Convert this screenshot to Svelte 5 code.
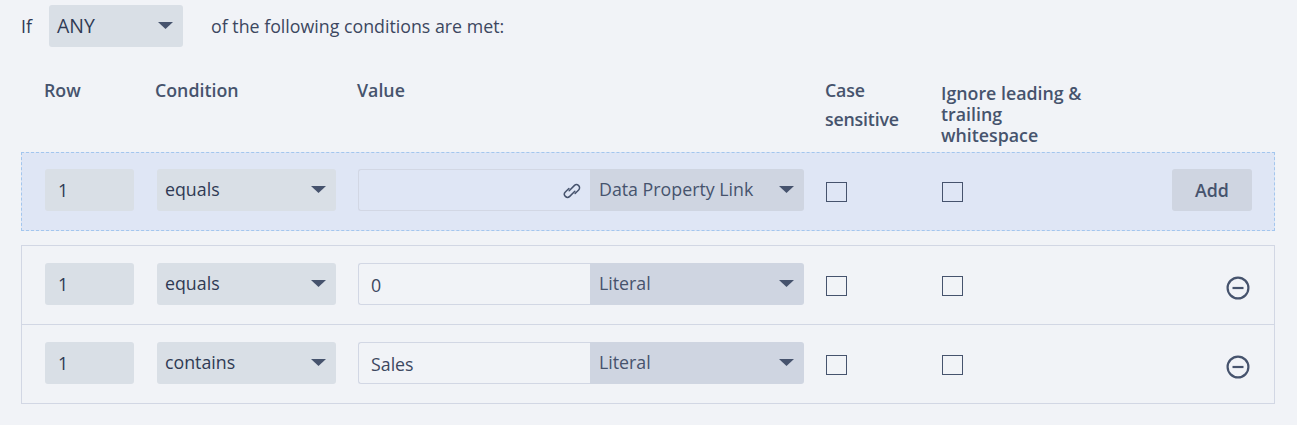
<script lang="ts">
	type Row = { condition: string; value: string; kind: string };

	const rows: Row[] = [
		{ condition: 'equals', value: '0', kind: 'Literal' },
		{ condition: 'contains', value: 'Sales', kind: 'Literal' }
	];
</script>

{#snippet chevron()}
	<svg class="caret" width="15" height="7" viewBox="0 0 15 7"><path d="M0 0h15L7.5 7z" fill="#46536d" /></svg>
{/snippet}

{#snippet fields(condition: string, value: string, kind: string, linked: boolean)}
	<div class="num">1</div>
	<div class="select cond"><span>{condition}</span>{@render chevron()}</div>
	<div class="value">
		<div class="value__input">
			<span>{value}</span>
			{#if linked}
				<svg class="link" width="18" height="18" viewBox="0 0 18 18" fill="none" stroke="#46536d" stroke-width="1.5" stroke-linecap="round">
					<g transform="rotate(-45 9 9)">
						<path d="M8.6 5H3.6a3.1 3.1 0 0 0 0 6.2H10.8" />
						<path d="M9.4 13h5a3.1 3.1 0 0 0 0-6.2H7.2" />
					</g>
				</svg>
			{/if}
		</div>
		<div class="select kind"><span>{kind}</span>{@render chevron()}</div>
	</div>
	<div class="check"></div>
	<div class="check"></div>
{/snippet}

<div class="page">
	<div class="match">
		<span class="match__if">If</span>
		<div class="select any"><span>ANY</span>{@render chevron()}</div>
		<span class="match__text">of the following conditions are met:</span>
	</div>

	<div class="head">
		<div class="head__cell">Row</div>
		<div class="head__cell">Condition</div>
		<div class="head__cell">Value</div>
		<div class="head__cell head__case">Case<br />sensitive</div>
		<div class="head__cell head__ignore">Ignore leading &amp; trailing whitespace</div>
	</div>

	<div class="row row--new">
		{@render fields('equals', '', 'Data Property Link', true)}
		<button type="button" class="add">Add</button>
	</div>

	<div class="list">
		{#each rows as row}
			<div class="row">
				{@render fields(row.condition, row.value, row.kind, false)}
				<svg class="remove" width="24" height="24" viewBox="0 0 24 24" fill="none" stroke="#46536d" stroke-width="2.2">
					<circle cx="12" cy="12" r="10.4" />
					<line x1="6.5" y1="12" x2="17.5" y2="12" />
				</svg>
			</div>
		{/each}
	</div>
</div>

<style>
	:global(body) {
		margin: 0;
		background: #f1f3f7;
	}

	.page {
		padding: 5px 22px 0 21px;
		font-family: 'Open Sans', sans-serif;
		font-size: 17.8px;
		color: #2f3a54;
		height: 420px;
		overflow: hidden;
	}

	.match {
		display: flex;
		align-items: center;
		height: 42px;
	}

	.match__if {
		width: 28px;
	}

	.match__text {
		margin-left: 28px;
		color: #3c4760;
	}

	.select {
		display: flex;
		align-items: center;
		justify-content: space-between;
		height: 42px;
		box-sizing: border-box;
		padding: 0 10px 2px 8px;
		background: #d9dfe6;
		border-radius: 3px;
	}

	.any {
		width: 134px;
		font-size: 19.5px;
	}

	.caret {
		flex: none;
		margin-top: 1px;
	}

	.head {
		display: grid;
		grid-template-columns: 89px 180px 446px 116px 1fr;
		column-gap: 22px;
		height: 105px;
		padding-left: 23px;
		box-sizing: border-box;
		font-weight: 600;
		color: #46536d;
		line-height: 21px;
	}

	.head__cell {
		padding-top: 33px;
	}

	.head__case {
		line-height: 29px;
		padding-top: 29px;
		letter-spacing: -0.2px;
	}

	.head__ignore {
		width: 150px;
		margin-left: -22px;
		padding-top: 36px;
	}

	.row {
		display: grid;
		grid-template-columns: 90px 179px 446px 116px 116px 1fr;
		column-gap: 22px;
		align-items: start;
		height: 78px;
		box-sizing: border-box;
		padding: 17px 22px 0 23px;
	}

	.row .check + .check {
		margin-left: -22px;
	}

	.row--new {
		height: 79px;
		padding-top: 16px;
		background: #dfe6f5;
		border: 1px dashed #a3c6ee;
	}

	.list {
		margin-top: 14px;
		border: 1px solid #d2d7e4;
		display: flex;
		flex-direction: column;
	}

	.list .row + .row {
		height: 79px;
		border-top: 1px solid #d2d7e4;
	}

	.num {
		display: flex;
		align-items: center;
		width: 89px;
		height: 42px;
		padding-left: 13px;
		box-sizing: border-box;
		background: #d9dfe6;
		border-radius: 3px;
	}

	.value {
		display: flex;
		height: 42px;
	}

	.value__input {
		flex: 1;
		display: flex;
		align-items: center;
		justify-content: space-between;
		padding: 2px 9px 0 12px;
		border: 1px solid #d2d7e4;
		border-right: none;
		border-radius: 3px 0 0 3px;
		box-sizing: border-box;
		color: #3c4760;
	}

	.link {
		flex: none;
	}

	.kind {
		width: 214px;
		padding-left: 9px;
		background: #cfd5e1;
		border-radius: 0 3px 3px 0;
		color: #46536d;
	}

	.check {
		width: 21px;
		height: 20px;
		box-sizing: border-box;
		border: 1px solid #46536d;
		margin-top: 13px;
	}

	.add {
		justify-self: end;
		width: 80px;
		height: 42px;
		padding: 0;
		border: none;
		border-radius: 3px;
		background: #cfd5e1;
		color: #46536d;
		font: 600 17.8px 'Open Sans', sans-serif;
	}

	.remove {
		justify-self: end;
		margin: 13px 2px 0 0;
	}
</style>
